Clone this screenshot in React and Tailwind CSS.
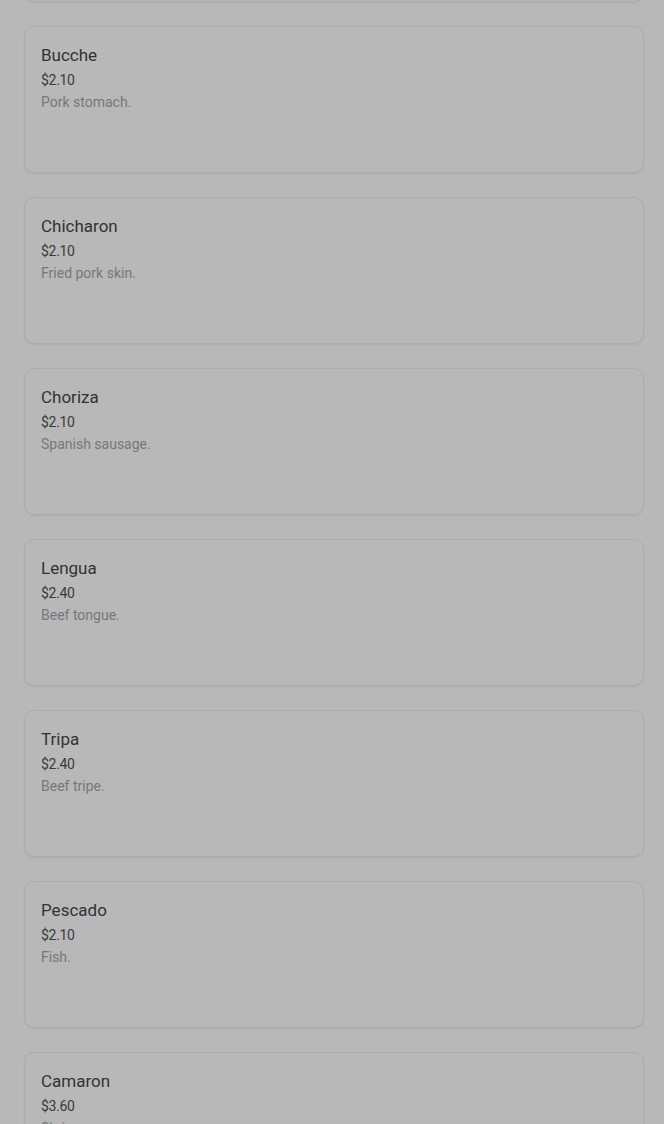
import React from "react";

const items = [
  { name: "Bucche", price: "$2.10", desc: "Pork stomach." },
  { name: "Chicharon", price: "$2.10", desc: "Fried pork skin." },
  { name: "Choriza", price: "$2.10", desc: "Spanish sausage." },
  { name: "Lengua", price: "$2.40", desc: "Beef tongue." },
  { name: "Tripa", price: "$2.40", desc: "Beef tripe." },
  { name: "Pescado", price: "$2.10", desc: "Fish." },
  { name: "Camaron", price: "$3.60", desc: "Shrimp." },
];

const cardClass =
  "h-[147px] rounded-[10px] border border-[#acacac] bg-[#b8b8b8] px-4 pt-4 shadow-[0_1px_2px_rgba(0,0,0,0.06)]";

function MenuCard({ item }) {
  return (
    <div className={cardClass}>
      <h3 className="text-[17px] leading-6 font-normal text-[#333333]">{item.name}</h3>
      <p className="mt-[3px] text-sm leading-5 tracking-[-0.3px] text-[#3a3a3a]">{item.price}</p>
      <p className="mt-[2px] text-sm leading-5 text-[#777777]">{item.desc}</p>
    </div>
  );
}

export default function App() {
  return (
    <div
      className="h-[1124px] overflow-hidden bg-[#b8b8b8] pl-[24px] pr-[20px]"
      style={{ fontFamily: "Roboto, 'Noto Sans', sans-serif" }}
    >
      <div className="-mt-[145px] flex flex-col gap-[24px]">
        {/* item scrolled above the top edge */}
        <div className={cardClass} />
        {items.map((item, i) => (
          <MenuCard key={i} item={item} />
        ))}
      </div>
    </div>
  );
}
